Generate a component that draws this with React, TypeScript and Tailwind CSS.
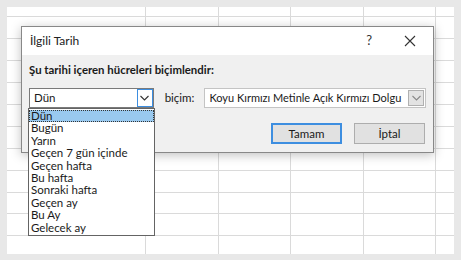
import React from "react";

const colW = [139, 73, 72, 73, 72, 18];
const rowH = [10, 22, 22, 22, 22, 22, 22, 22, 22, 21, 22, 18];

const items = [
  "Dün",
  "Bugün",
  "Yarın",
  "Geçen 7 gün içinde",
  "Geçen hafta",
  "Bu hafta",
  "Sonraki hafta",
  "Geçen ay",
  "Bu Ay",
  "Gelecek ay",
];

function Chevron({ color = "#444" }: { color?: string }) {
  return (
    <svg width="9" height="6" viewBox="0 0 9 6">
      <path d="M0.5 1 L4.5 5 L8.5 1" fill="none" stroke={color} strokeWidth="1.1" />
    </svg>
  );
}

const font = { fontFamily: 'Lato, "Noto Sans", sans-serif' };

export default function App() {
  return (
    <div className="relative w-[461px] h-[260px] bg-[#e8e8e8] p-[7px] overflow-hidden" style={font}>
      <div className="flex flex-col bg-white w-[447px]">
        {rowH.map((h, r) => (
          <div key={r} className="flex" style={{ height: h }}>
            {colW.map((w, c) => (
              <div
                key={c}
                className={`box-border border-[#dadada] ${c < colW.length - 1 ? "border-r" : ""} ${r < rowH.length - 1 ? "border-b" : ""}`}
                style={{ width: w, height: h }}
              />
            ))}
          </div>
        ))}
      </div>

      {/* Dialog */}
      <div className="absolute left-[21px] top-[26px] w-[413px] h-[127px] border border-[#888888] bg-[#f0f0f0] shadow-[0_2px_10px_rgba(0,0,0,0.25)] flex flex-col text-[11px] text-[#1a1a1a]">
        <div className="h-[28px] bg-white flex items-center pl-[8px] pr-[16px] shrink-0">
          <span className="text-[12px] text-[#222]">İlgili Tarih</span>
          <span className="ml-auto text-[13px] text-[#333] mr-[32px]">?</span>
          <svg width="12" height="12" viewBox="0 0 12 12" className="mr-[1px]">
            <path d="M1 1 L11 11 M11 1 L1 11" stroke="#333" strokeWidth="1.1" />
          </svg>
        </div>
        <div className="pl-[7px] pr-[7px] pt-[6px] flex flex-col">
          <div className="font-bold text-[11.4px] h-[17px] flex items-center">Şu tarihi içeren hücreleri biçimlendir:</div>
          <div className="flex items-center mt-[10px] h-[20px]">
            <div className="w-[126px] h-[20px] bg-white border border-[#7a7a7a] flex items-center box-border">
              <span className="pl-[4px] flex-1 text-[11.5px]">Dün</span>
              <div className="w-[16px] h-[18px] border border-[#3d8ee0] flex items-center justify-center box-border">
                <Chevron color="#333" />
              </div>
            </div>
            <span className="ml-[11px] text-[11.5px]">biçim:</span>
            <div className="ml-[10px] w-[224px] h-[20px] bg-white border border-[#c4c4c4] flex items-center box-border overflow-hidden">
              <span className="pl-[4px] flex-1 whitespace-nowrap text-[11px]">Koyu Kırmızı Metinle Açık Kırmızı Dolgu</span>
              <div className="w-[16px] h-[16px] mr-[1px] bg-[#e3e3e3] border border-[#b0b0b0] flex items-center justify-center box-border shrink-0">
                <Chevron color="#888" />
              </div>
            </div>
          </div>
          <div className="flex justify-end mt-[15px] gap-[12px] pr-[1px]">
            <button className="w-[71px] h-[21px] border-2 border-[#3d8ee0] bg-[#e1e1e1] flex items-center justify-center box-border text-[11.5px]">
              Tamam
            </button>
            <button className="w-[71px] h-[21px] border border-[#adadad] bg-[#e1e1e1] flex items-center justify-center box-border text-[11.5px]">
              İptal
            </button>
          </div>
        </div>
      </div>

      {/* Dropdown list */}
      <div className="absolute left-[28px] top-[108px] w-[127px] h-[128px] bg-white border border-[#646464] box-border text-[11.5px] text-[#1a1a1a] pt-[1px]">
        {items.map((t, i) => (
          <div
            key={i}
            className={`h-[12.4px] leading-[12.4px] pl-[2px] whitespace-nowrap ${i === 0 ? "bg-[#99c9ef] outline-1 outline-dotted outline-[#333] -outline-offset-1" : ""}`}
          >
            {t}
          </div>
        ))}
      </div>
    </div>
  );
}
